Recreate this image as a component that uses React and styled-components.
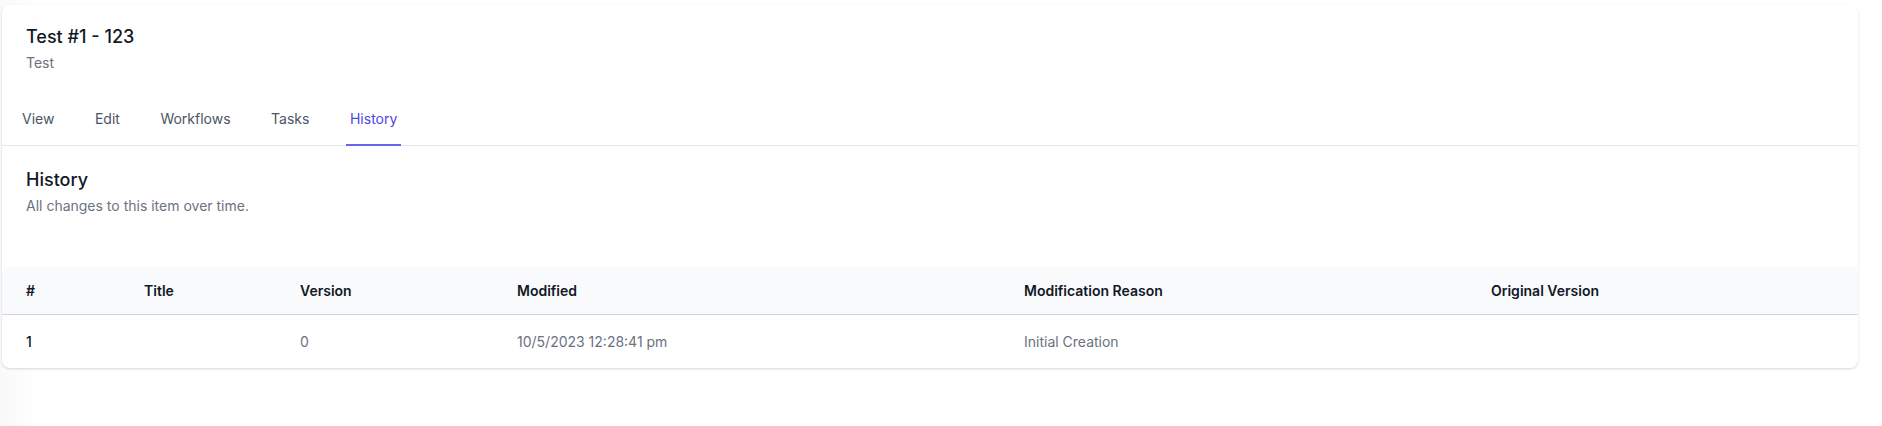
import React from "react";
import styled, { createGlobalStyle } from "styled-components";

const GlobalStyle = createGlobalStyle`
  body {
    margin: 0;
    background: #ffffff;
    font-family: Inter, "Noto Sans", sans-serif;
    -webkit-font-smoothing: antialiased;
  }
`;

const tabs = ["View", "Edit", "Workflows", "Tasks", "History"];

const columns = [
  { label: "#", width: 118 },
  { label: "Title", width: 156 },
  { label: "Version", width: 217 },
  { label: "Modified", width: 507 },
  { label: "Modification Reason", width: 467 },
  { label: "Original Version" },
];

const rows = [
  {
    id: "1",
    title: "",
    version: "0",
    modified: "10/5/2023 12:28:41 pm",
    reason: "Initial Creation",
    original: "",
  },
];

export default function App() {
  return (
    <Page>
      <GlobalStyle />
      <Card>
        <CardHeader>
          <Title>Test #1 - 123</Title>
          <Subtitle>Test</Subtitle>
        </CardHeader>
        <TabNav>
          {tabs.map((t) => (
            <Tab key={t} active={t === "History"}>
              {t}
            </Tab>
          ))}
        </TabNav>
        <Section>
          <Title>History</Title>
          <Subtitle>All changes to this item over time.</Subtitle>
        </Section>
        <TableWrap>
          <Table>
            <colgroup>
              {columns.map((c) => (
                <col key={c.label} width={c.width} />
              ))}
            </colgroup>
            <thead>
              <tr>
                {columns.map((c) => (
                  <Th key={c.label}>{c.label}</Th>
                ))}
              </tr>
            </thead>
            <tbody>
              {rows.map((r) => (
                <tr key={r.id}>
                  <Td strong>{r.id}</Td>
                  <Td>{r.title}</Td>
                  <Td>{r.version}</Td>
                  <Td>{r.modified}</Td>
                  <Td>{r.reason}</Td>
                  <Td>{r.original}</Td>
                </tr>
              ))}
            </tbody>
          </Table>
        </TableWrap>
      </Card>
    </Page>
  );
}

const Page = styled.div`
  min-height: 426px;
  box-sizing: border-box;
  padding: 5px 24px 0 2px;
  background: linear-gradient(
    to right,
    rgba(0, 0, 0, 0.025) 0px,
    rgba(0, 0, 0, 0) 40px
  );
`;

const Card = styled.div`
  background: #ffffff;
  border-radius: 8px;
  box-shadow: 0 1px 3px rgba(0, 0, 0, 0.1), 0 1px 2px rgba(0, 0, 0, 0.06);
  overflow: hidden;
`;

const CardHeader = styled.div`
  padding: 20px 24px 0;
`;

const Title = styled.h3`
  margin: 0;
  font-size: 18px;
  line-height: 24px;
  font-weight: 500;
  color: #111827;
`;

const Subtitle = styled.p`
  margin: 4px 0 0;
  font-size: 14px;
  line-height: 20px;
  color: #6b7280;
`;

const TabNav = styled.nav`
  display: flex;
  gap: 32.5px;
  margin-top: 20px;
  padding: 0 16px;
  border-bottom: 1px solid #e5e7eb;
`;

const Tab = styled.a`
  padding: 16px 4px 15px;
  margin-bottom: -1px;
  font-size: 14px;
  line-height: 20px;
  font-weight: 400;
  color: ${(p) => (p.active ? "#4f46e5" : "#4b5563")};
  border-bottom: 2px solid ${(p) => (p.active ? "#6366f1" : "transparent")};
  cursor: pointer;
`;

const Section = styled.div`
  padding: 22px 24px 50px;
`;

const TableWrap = styled.div`
  border-radius: 8px 8px 0 0;
  overflow: hidden;
`;

const Table = styled.table`
  width: 100%;
  border-collapse: collapse;
  table-layout: fixed;
`;

const Th = styled.th`
  height: 48px;
  padding: 0 24px;
  text-align: left;
  font-size: 14px;
  font-weight: 600;
  color: #111827;
  background: #f9fafb;
  border-bottom: 1px solid #d1d5db;
`;

const Td = styled.td`
  height: 53px;
  padding: 0 24px;
  font-size: 14px;
  font-weight: ${(p) => (p.strong ? 500 : 400)};
  color: ${(p) => (p.strong ? "#111827" : "#6b7280")};
  white-space: nowrap;
`;
